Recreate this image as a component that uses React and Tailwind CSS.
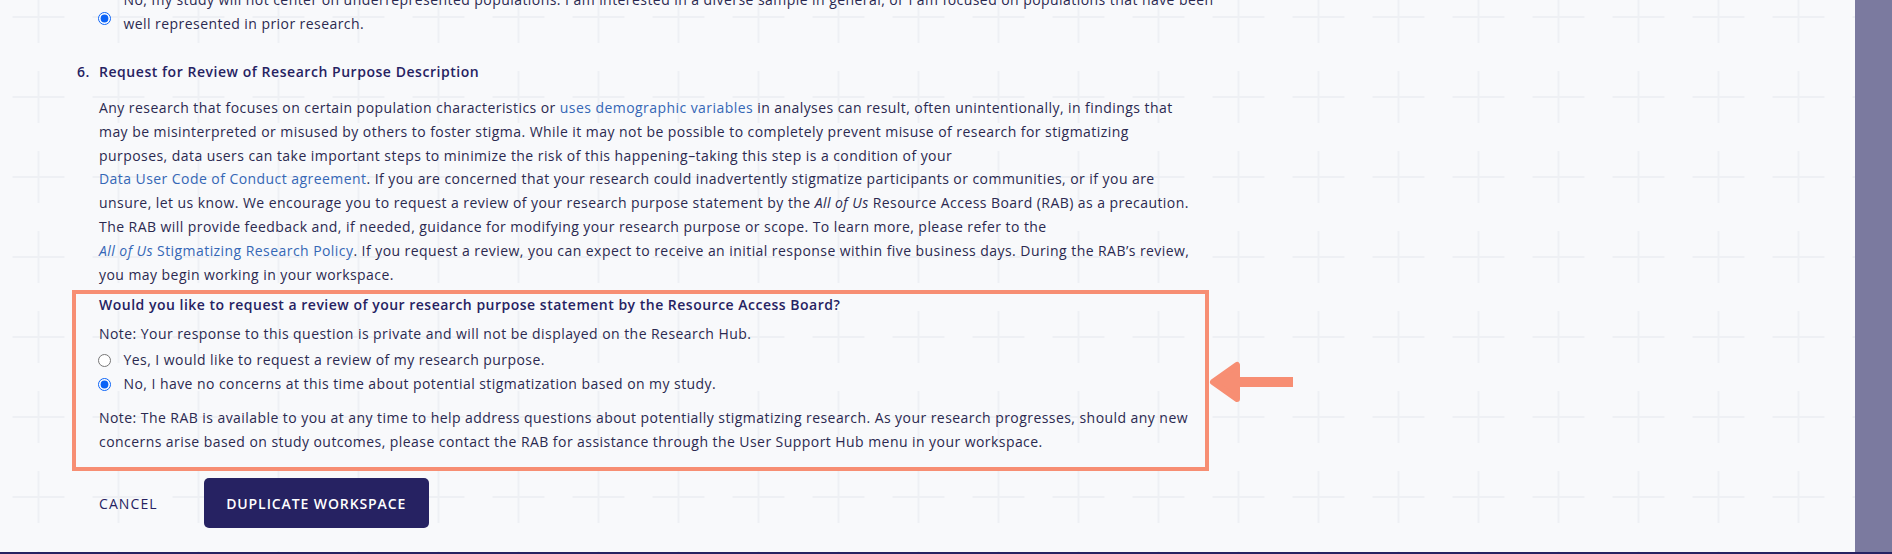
import React from 'react'

const font = { fontFamily: '"Open Sans", "Liberation Sans", sans-serif' }

function Radio({ checked }) {
    return (
        <input
            type="radio"
            readOnly
            checked={checked}
            className="w-[13px] h-[13px] shrink-0 accent-[#0b63f6]"
        />
    )
}

function GridCrosses() {
    return (
        <svg className="absolute inset-0 w-full h-full pointer-events-none" aria-hidden="true">
            <defs>
                <pattern id="crosses" width="80" height="80" x="-1.5" y="-23" patternUnits="userSpaceOnUse">
                    <rect x="14" y="39" width="52" height="2" fill="#eef0f4" />
                    <rect x="39" y="14" width="2" height="52" fill="#eef0f4" />
                </pattern>
            </defs>
            <rect width="100%" height="100%" fill="url(#crosses)" />
        </svg>
    )
}

function Arrow() {
    return (
        <svg className="absolute left-[1209px] top-[361px]" width="86" height="42" viewBox="0 0 86 42">
            <polygon points="4,21 28,4 28,38" fill="#f78e73" stroke="#f78e73" strokeWidth="6" strokeLinejoin="round" />
            <rect x="26" y="16" width="58" height="10" fill="#f78e73" />
        </svg>
    )
}

export default function App() {
    const link = 'text-[#3567b6]'
    return (
        <div className="h-[554px] w-full overflow-hidden bg-[#f8f9fb] border-b-2 border-[#262262] flex" style={font}>
            <div className="relative flex-1 h-full overflow-hidden">
                <GridCrosses />
                <Arrow />

                <div className="relative pl-[77px] -mt-3 text-[14px] tracking-[0.44px] text-[#2b2950]">
                    {/* previous question, last option */}
                    <div className="pl-[22px] flex items-start gap-[13px] leading-[24px]">
                        <div className="mt-[20px] -ml-[1.5px]">
                            <Radio checked />
                        </div>
                        <p className="whitespace-nowrap">
                            No, my study will not center on underrepresented populations. I am interested in a diverse sample in general, or I am focused on populations that have been
                            <br />
                            well represented in prior research.
                        </p>
                    </div>

                    {/* 6. heading */}
                    <div className="mt-6 flex leading-[24px] font-semibold tracking-[0.54px] text-[#262262]">
                        <span className="w-[22px]">6.</span>
                        <h2>Request for Review of Research Purpose Description</h2>
                    </div>

                    <p className="mt-3 pl-[22px] leading-[23.8px] whitespace-nowrap">
                        Any research that focuses on certain population characteristics or <span className={link}>uses demographic variables</span> in analyses can result, often unintentionally, in findings that
                        <br />
                        may be misinterpreted or misused by others to foster stigma. While it may not be possible to completely prevent misuse of research for stigmatizing
                        <br />
                        purposes, data users can take important steps to minimize the risk of this happening–taking this step is a condition of your
                        <br />
                        <span className={link}>Data User Code of Conduct agreement</span>. If you are concerned that your research could inadvertently stigmatize participants or communities, or if you are
                        <br />
                        unsure, let us know. We encourage you to request a review of your research purpose statement by the <i>All of Us</i> Resource Access Board (RAB) as a precaution.
                        <br />
                        The RAB will provide feedback and, if needed, guidance for modifying your research purpose or scope. To learn more, please refer to the
                        <br />
                        <span className={link}><i>All of Us</i> Stigmatizing Research Policy</span>. If you request a review, you can expect to receive an initial response within five business days. During the RAB’s review,
                        <br />
                        you may begin working in your workspace.
                    </p>

                    {/* highlighted question */}
                    <div className="mt-1 -ml-[5px] w-[1137px] border-4 border-[#f78e73] pl-[23px] pb-[13px] whitespace-nowrap">
                        <p className="leading-[22px] font-semibold tracking-[0.5px] text-[#262262]">
                            Would you like to request a review of your research purpose statement by the Resource Access Board?
                        </p>
                        <p className="mt-1.5 leading-[24px]">
                            Note: Your response to this question is private and will not be displayed on the Research Hub.
                        </p>
                        <label className="mt-0.5 flex items-center gap-[13px] leading-[24px]">
                            <span className="-ml-[1.5px] flex"><Radio checked={false} /></span>
                            Yes, I would like to request a review of my research purpose.
                        </label>
                        <label className="flex items-center gap-[13px] leading-[24px]">
                            <span className="-ml-[1.5px] flex"><Radio checked /></span>
                            No, I have no concerns at this time about potential stigmatization based on my study.
                        </label>
                        <p className="mt-2.5 leading-[24px]">
                            Note: The RAB is available to you at any time to help address questions about potentially stigmatizing research. As your research progresses, should any new
                            <br />
                            concerns arise based on study outcomes, please contact the RAB for assistance through the User Support Hub menu in your workspace.
                        </p>
                    </div>

                    {/* actions */}
                    <div className="mt-[7px] pl-[22px] flex items-center gap-[46px]">
                        <button className="text-[14px] font-medium tracking-[1.1px] text-[#262262] uppercase">Cancel</button>
                        <button className="h-[50px] w-[225px] rounded-[5px] bg-[#262262] text-white text-[14px] font-semibold tracking-[0.9px] uppercase">
                            Duplicate Workspace
                        </button>
                    </div>
                </div>
            </div>
            <div className="w-[37px] h-full bg-[#7b7a9f]" />
        </div>
    )
}
